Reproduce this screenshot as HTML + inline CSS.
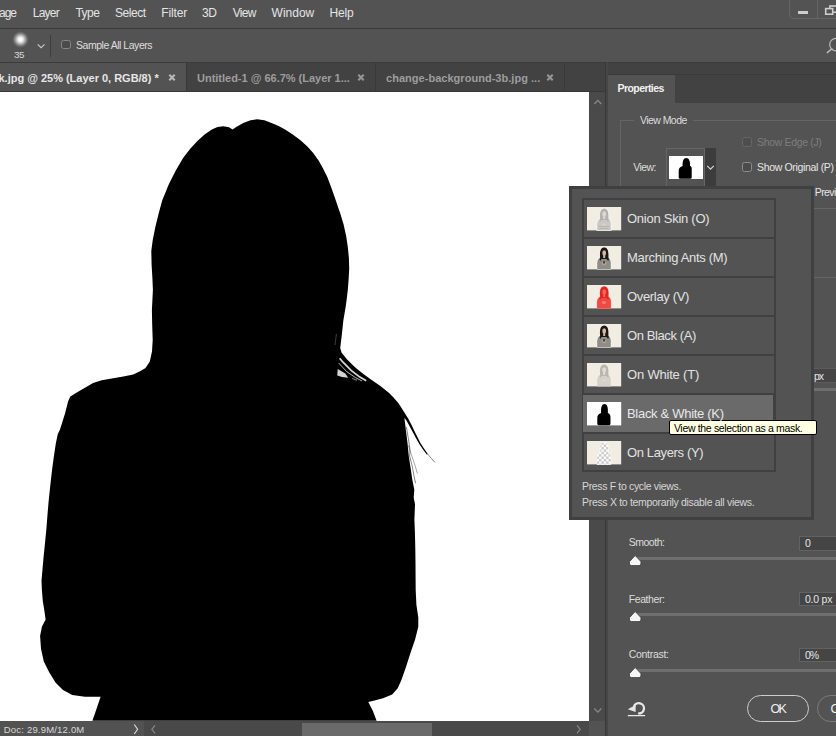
<!DOCTYPE html>
<html><head><meta charset="utf-8"><title>ps</title>
<style>
html,body{margin:0;padding:0;}
body{width:836px;height:736px;overflow:hidden;background:#535353;position:relative;font-family:'Liberation Sans', sans-serif;}
.a{position:absolute;}
.t{position:absolute;white-space:pre;line-height:1;font-family:'Liberation Sans', sans-serif;}
svg{position:absolute;overflow:visible;}
</style></head><body>
<div class="a" style="left:0px;top:0px;width:836px;height:28px;background:#535353;"></div>
<div class="a" style="left:0px;top:28px;width:836px;height:1px;background:#3a3a3a;"></div>
<div class="a" style="left:0px;top:29px;width:836px;height:33px;background:#535353;"></div>
<div class="a" style="left:0px;top:62px;width:836px;height:1px;background:#3b3b3b;"></div>
<div class="a" style="left:789px;top:-2px;width:60px;height:18.8px;border:1px solid #656565;border-radius:0 0 0 4px;"></div>
<div class="a" style="left:817px;top:0px;width:1px;height:17.5px;background:#656565;"></div>
<div class="a" style="left:798px;top:10.7px;width:10.3px;height:3.6px;background:#cdcdcd;"></div>
<svg style="left:820px;top:2px" width="16" height="16" viewBox="820 2 16 16"><rect x="829.9" y="6" width="8" height="6.2" fill="none" stroke="#cdcdcd" stroke-width="1.6"/><rect x="825.7" y="8.6" width="7" height="5.6" fill="#535353" stroke="#cdcdcd" stroke-width="1.6"/></svg>
<div class="a" style="left:11.8px;top:31px;width:17px;height:17px;border-radius:50%;background:radial-gradient(circle closest-side,#ffffff 0%,#fdfdfd 15%,#e9e9e9 30%,#c4c4c4 45%,#9c9c9c 60%,#797979 74%,#626262 86%,rgba(83,83,83,0) 100%);"></div>
<svg style="left:36px;top:42px" width="10" height="8" viewBox="36 42 10 8"><path d="M37.7,44.3 L41.1,47.7 L44.5,44.3" fill="none" stroke="#c9c9c9" stroke-width="1.1"/></svg>
<div class="a" style="left:50px;top:34.5px;width:1px;height:22px;background:#3e3e3e;"></div>
<div class="a" style="left:61px;top:39.5px;width:9.8px;height:9.9px;border:1.3px solid #878787;border-radius:2.5px;background:#4b4b4b;box-sizing:border-box"></div>
<svg style="left:820px;top:34px" width="16" height="24" viewBox="820 34 16 24"><circle cx="836" cy="44.6" r="6.3" fill="none" stroke="#b4b4b4" stroke-width="1.3"/><path d="M827.3,52.6 L831.7,48.8" stroke="#b4b4b4" stroke-width="1.6" stroke-linecap="round"/></svg>
<div class="a" style="left:0px;top:63px;width:605px;height:28px;background:#424242;"></div>
<div class="a" style="left:0px;top:63px;width:186px;height:28px;background:#535353;"></div>
<div class="a" style="left:186px;top:63px;width:1px;height:28px;background:#383838;"></div>
<div class="a" style="left:375px;top:63px;width:1px;height:28px;background:#383838;"></div>
<div class="a" style="left:564px;top:63px;width:1px;height:28px;background:#383838;"></div>
<div class="a" style="left:0px;top:91px;width:605px;height:1px;background:#383838;"></div>
<svg style="left:167.9px;top:72.6px" width="8" height="9" viewBox="-4 -4.5 8 9"><path d="M-2.7,-2.7 L2.7,2.7 M2.7,-2.7 L-2.7,2.7" stroke="#b8b8b8" stroke-width="2.1"/></svg>
<svg style="left:356.8px;top:72.6px" width="8" height="9" viewBox="-4 -4.5 8 9"><path d="M-2.7,-2.7 L2.7,2.7 M2.7,-2.7 L-2.7,2.7" stroke="#969696" stroke-width="2.1"/></svg>
<svg style="left:545.8px;top:72.6px" width="8" height="9" viewBox="-4 -4.5 8 9"><path d="M-2.7,-2.7 L2.7,2.7 M2.7,-2.7 L-2.7,2.7" stroke="#969696" stroke-width="2.1"/></svg>
<div class="a" style="left:589px;top:92px;width:16px;height:629px;background:#4a4a4a;"></div>
<svg style="left:589px;top:92px" width="16" height="629" viewBox="589 92 16 629"><path d="M594.3,104 L597.8,100.4 L601.3,104" fill="none" stroke="#8a8a8a" stroke-width="1.2"/><path d="M594.3,708.5 L597.8,712.1 L601.3,708.5" fill="none" stroke="#8a8a8a" stroke-width="1.2"/></svg>
<div class="a" style="left:0px;top:721px;width:605px;height:15px;background:#494949;"></div>
<div class="a" style="left:0px;top:721px;width:143.5px;height:15px;background:#525252;"></div>
<div class="a" style="left:302.4px;top:723px;width:129.6px;height:13px;background:#6a6a6a;"></div>
<div class="a" style="left:589px;top:721px;width:16px;height:15px;background:#535353;"></div>
<svg style="left:0;top:721px" width="605" height="15" viewBox="0 721 605 15"><path d="M134.3,724.5 L137.6,729.3 L134.3,734" fill="none" stroke="#e0e0e0" stroke-width="1.1"/><path d="M155,725.3 L151.8,729.3 L155,733.3" fill="none" stroke="#8a8a8a" stroke-width="1.1"/><path d="M577,725.3 L580.2,729.3 L577,733.3" fill="none" stroke="#8a8a8a" stroke-width="1.1"/></svg>
<div class="a" style="left:604.6px;top:62px;width:3.2px;height:674px;background:#464646;"></div>
<div class="a" style="left:604.6px;top:62px;width:1.8px;height:674px;background:#383838;"></div>
<div class="a" style="left:0px;top:92px;width:589px;height:629px;background:#ffffff;"></div>
<svg style="left:0;top:0" width="589" height="721" viewBox="0 0 589 721"><path d="M152.9,290 L152.4,278.3 L151.6,264.7 L151.3,251.1 L152.7,240.3 L155.4,226.7 L158.8,213.1 L162.2,200.5 L168.7,184.6 L175.9,170.3 L183.1,158.1 L190.2,148.8 L197.4,140.9 L204.6,134.4 L211.8,129.4 L217.5,126.9 L223.3,126.2 L229,127.2 L232.6,129.4 L236.2,126.9 L243.3,122.9 L250.5,120.3 L257.2,119.3 L264.4,120.3 L271.5,122.9 L278.7,126.1 L285.9,130.1 L293.1,134.7 L300.2,140.1 L307.4,146.6 L313.2,153.1 L318.9,161 L323.2,168.8 L327.5,177.5 L331.8,188.9 L336,200.9 L340.1,213.1 L343.5,224 L346.2,236.2 L347.8,247.1 L348.9,257.9 L349.2,268.8 L348.6,279.7 L347.8,290 L346.6,300 L345.6,307.2 L343.3,320.8 L341.9,334.3 L340.2,347.9 L341.5,352.6 L346.9,359.3 L355.3,367.6 L363.7,374.3 L372,380.2 L380.4,386.1 L388.8,392.8 L393.5,397.4 L398.5,403.2 L402.8,410 L408.2,418.4 L411.3,424.5 L414.3,430.7 L417.3,436.8 L420.4,442.9 L424,448.5 L427.8,453.9 L427,454.8 L423,449.6 L419.3,444 L415.9,437.9 L412.7,432 L409.6,426.2 L406.6,420.8 L404.4,417.8 L405.8,429.4 L407.6,444.1 L408.8,456.3 L410.7,468.6 L412.5,480.8 L414.3,489.4 L413.7,497.8 L415,504.3 L414.4,520 L414.9,532 L415.3,548 L415.5,564.2 L415.6,580 L415.7,590 L416.4,604.7 L418.3,617.5 L418.3,626.7 L415.1,639.5 L410.6,652.4 L406,667.1 L401.4,679.9 L397.7,688.2 L392.2,694.6 L383,698.3 L375.5,700.3 L368.3,701.9 L372.9,711.1 L376.6,720.7 L92.4,720.7 L97,707.4 L100.6,696.8 L85,696.8 L72.2,695 L63,690 L55.7,682.7 L49.3,672.6 L43.8,661.6 L41,648.7 L40.1,635.9 L41.9,626.7 L45.6,619.4 L44.3,610.2 L42.8,601 L41.9,590 L41.5,580.8 L42.5,569 L43.5,557.8 L45,543 L46.4,529.1 L47.5,514.5 L48.7,500.4 L50.4,484.5 L52.2,468.8 L54,455.5 L55.9,443 L57.8,434 L59.8,430 L61.5,424.7 L65.1,413.2 L68,401.7 L70.1,396.7 L75.9,393.1 L84.5,388.1 L93.1,383.1 L101.7,380.2 L111.8,378.5 L123.3,376.6 L133.3,374.4 L140.5,370.9 L145.5,368 L149.8,361.5 L152,351.5 L152.7,340 L152.2,325 L151.9,310 L152.4,300 Z" fill="#000"/><path d="M337.7,368.9 L345.3,373.5 L348.2,377.7 L342,377 L337.3,375.6 Z" fill="#d4d4d4"/><path d="M352,378.2 L357,380.4" stroke="#bdbdbd" stroke-width="1.2" fill="none" opacity=".6"/><path d="M339.6,358.2 L343,362.2 L351.1,370.3 L359.5,376.8 L366.2,380.8" stroke="#fff" stroke-width="1.7" fill="none" opacity=".85"/><path d="M338.6,363 L346.9,371.8 L355.3,377.5 L362,381" stroke="#fff" stroke-width="1" fill="none" opacity=".7"/><path d="M336.4,334 L335,345" stroke="#fff" stroke-width=".8" fill="none" opacity=".3"/><path d="M427.6,453.9 L431.5,458.6 L435.1,462.5" stroke="#000" stroke-width="1" fill="none" opacity=".45"/><path d="M406.4,427 L408.6,440 L410,450 L409.6,456 L412.2,466 L414,476 L415.6,483.2" stroke="#000" stroke-width=".8" fill="none" opacity=".6"/><path d="M408.2,445.3 L411.5,455 L415.2,466 L417.4,473.5" stroke="#000" stroke-width=".7" fill="none" opacity=".5"/></svg>
<div class="a" style="left:608px;top:63px;width:228px;height:12px;background:#424242;"></div>
<div class="a" style="left:608px;top:74px;width:228px;height:1px;background:#3b3b3b;"></div>
<div class="a" style="left:608px;top:75px;width:228px;height:27.5px;background:#424242;"></div>
<div class="a" style="left:608px;top:75px;width:67px;height:28px;background:#535353;"></div>
<div class="a" style="left:608px;top:102.5px;width:228px;height:634px;background:#535353;"></div>
<div class="a" style="left:619.5px;top:120.3px;width:217px;height:1px;background:#656565;"></div>
<div class="a" style="left:619.5px;top:120.3px;width:1px;height:66px;background:#656565;"></div>
<div class="a" style="left:634px;top:118px;width:59px;height:6px;background:#535353;"></div>
<div class="a" style="left:666.3px;top:148px;width:38.7px;height:39px;background:#535353;border:1px solid #666;box-sizing:border-box;"></div>
<div class="a" style="left:705px;top:148px;width:11px;height:39px;background:#3c3c3c;"></div>
<div class="a" style="left:668.9px;top:155.9px;width:34px;height:22.9px;background:#ffffff;"></div>
<svg style="left:669px;top:156px" width="35" height="23" viewBox="669 156 35 23"><path d="M680,178.7 Q678.7,178.7 678.7,177.4 L678.7,171 C678.7,168 680.2,166.9 682.6,166 C682.4,160.6 683.6,157.9 686.3,157.9 C689,157.9 690.2,160.6 690,166 C692.2,166.9 691.7,168 691.7,171 L691.7,177.4 Q691.7,178.7 690.4,178.7 Z" fill="#000"/></svg>
<svg style="left:705px;top:160px" width="11" height="14" viewBox="705 160 11 14"><path d="M707.2,165.8 L710.5,169.2 L713.8,165.8" fill="none" stroke="#d6d6d6" stroke-width="1.2"/></svg>
<div class="a" style="left:741.8px;top:137.2px;width:10px;height:9.6px;border:1.3px solid #666666;border-radius:2.5px;background:#4e4e4e;box-sizing:border-box"></div>
<div class="a" style="left:741.8px;top:162.1px;width:10px;height:9.7px;border:1.3px solid #8c8c8c;border-radius:2.5px;background:#4b4b4b;box-sizing:border-box"></div>
<div class="a" style="left:814px;top:207.5px;width:22px;height:1px;background:#666;"></div>
<div class="a" style="left:814px;top:276.7px;width:22px;height:1px;background:#666;"></div>
<div class="a" style="left:814px;top:367.5px;width:22px;height:15px;background:#454545;border-top:1px solid #5c5c5c;border-bottom:1px solid #5c5c5c;box-sizing:border-box;"></div>
<div class="a" style="left:814px;top:388.3px;width:22px;height:3px;background:#6e6e6e;"></div>
<div class="a" style="left:799.4px;top:536.4px;width:40px;height:14.2px;background:#454545;border:1px solid #626262;box-sizing:border-box;"></div>
<div class="a" style="left:634px;top:557.1px;width:202px;height:2.8px;background:#6f6f6f;"></div>
<svg style="left:628px;top:553.5px" width="14" height="14" viewBox="0 0 14 14"><path d="M7.2,1.6 L12.9,7.5 L12.9,9.8 Q12.9,11.6 11.1,11.6 L3.3,11.6 Q1.5,11.6 1.5,9.8 L1.5,7.5 Z" fill="#f6f6f6" stroke="#2e2e2e" stroke-width=".7"/></svg>
<div class="a" style="left:799.4px;top:591.5px;width:40px;height:14.2px;background:#454545;border:1px solid #626262;box-sizing:border-box;"></div>
<div class="a" style="left:634px;top:613.3000000000001px;width:202px;height:2.8px;background:#6f6f6f;"></div>
<svg style="left:628px;top:609.7px" width="14" height="14" viewBox="0 0 14 14"><path d="M7.2,1.6 L12.9,7.5 L12.9,9.8 Q12.9,11.6 11.1,11.6 L3.3,11.6 Q1.5,11.6 1.5,9.8 L1.5,7.5 Z" fill="#f6f6f6" stroke="#2e2e2e" stroke-width=".7"/></svg>
<div class="a" style="left:799.4px;top:647.5px;width:40px;height:14.2px;background:#454545;border:1px solid #626262;box-sizing:border-box;"></div>
<div class="a" style="left:634px;top:669.4px;width:202px;height:2.8px;background:#6f6f6f;"></div>
<svg style="left:628px;top:665.8px" width="14" height="14" viewBox="0 0 14 14"><path d="M7.2,1.6 L12.9,7.5 L12.9,9.8 Q12.9,11.6 11.1,11.6 L3.3,11.6 Q1.5,11.6 1.5,9.8 L1.5,7.5 Z" fill="#f6f6f6" stroke="#2e2e2e" stroke-width=".7"/></svg>
<svg style="left:626px;top:700px" width="22" height="20" viewBox="626 700 22 20"><path d="M633.9,706.9 A5.15,5.15 0 1 1 638.1,713.4" fill="none" stroke="#e8e8e8" stroke-width="2.3"/><path d="M627.8,709.2 L635.6,705.0 L635.6,712.0 Z" fill="#e8e8e8"/><path d="M627.8,715.6 L645.1,715.6" stroke="#e8e8e8" stroke-width="1.3"/></svg>
<div class="a" style="left:747.4px;top:695px;width:61.6px;height:27px;border:1.8px solid #cdcdcd;border-radius:13.5px;box-sizing:border-box;"></div>
<div class="a" style="left:817.3px;top:695px;width:61.6px;height:27px;border:1.3px solid #7c7c7c;border-radius:13.5px;box-sizing:border-box;"></div>
<div class="a" style="left:569px;top:186px;width:245px;height:334px;background:#535353;border:3px solid #404040;box-sizing:border-box;"></div>
<div class="a" style="left:581.5px;top:198px;width:194px;height:273.5px;background:#404040;"></div>
<div class="a" style="left:583.5px;top:200px;width:190px;height:37px;background:#535353;"><svg width="34.2" height="23.4" viewBox="0 0 34.2 23.4" style="left:3.4px;top:6.8px"><rect width="34.2" height="23.4" fill="#f1ede3"/><path d="M10.2,23.4 L10.2,17.2 C10.2,13.8 11.8,12.4 13.6,11.8 C12.4,5.2 13.8,1.6 17.2,1.6 C20.6,1.6 22,5.2 20.9,11.8 C22.7,12.4 23.8,13.8 23.8,17.2 L23.8,23.4 Z" fill="#fbfaf7" stroke="#fbfaf7" stroke-width="1.2"/><path d="M10.2,23.4 L10.2,17.2 C10.2,13.8 11.8,12.2 14,11.4 L20.6,11.4 C22.8,12.2 23.8,13.8 23.8,17.2 L23.8,23.4 Z" fill="#c9c8c6"/><path d="M13.1,11.6 C12.5,5.2 13.8,1.6 17.2,1.6 C20.6,1.6 21.9,5.2 21.4,11.6 Q22.3,13.4 21.2,15 L19.6,13 L14.6,13 L13.2,15 Q12.2,13.4 13.1,11.6 Z" fill="#b4b2b0"/><ellipse cx="17.2" cy="6.9" rx="1.9" ry="2.7" fill="#e2d6cf"/><rect x="16.2" y="9" width="2" height="3" fill="#e2d6cf"/><ellipse cx="17" cy="17.6" rx="2.3" ry="1.4" fill="#e0cdc6"/><path d="M12,19.5 L22,19.5 M12.5,21.5 L21.5,21.5" stroke="#aeadab" stroke-width=".7"/></svg></div>
<div class="a" style="left:583.5px;top:239px;width:190px;height:37px;background:#535353;"><svg width="34.2" height="23.4" viewBox="0 0 34.2 23.4" style="left:3.4px;top:6.8px"><rect width="34.2" height="23.4" fill="#f1ede3"/><path d="M10.2,23.4 L10.2,17.2 C10.2,13.8 11.8,12.4 13.6,11.8 C12.4,5.2 13.8,1.6 17.2,1.6 C20.6,1.6 22,5.2 20.9,11.8 C22.7,12.4 23.8,13.8 23.8,17.2 L23.8,23.4 Z" fill="#fbfaf7" stroke="#fbfaf7" stroke-width=".9"/><path d="M10.2,23.4 L10.2,17.2 C10.2,13.8 11.8,12.2 14,11.4 L20.6,11.4 C22.8,12.2 23.8,13.8 23.8,17.2 L23.8,23.4 Z" fill="#8f8d8a"/><path d="M13.1,11.6 C12.5,5.2 13.8,1.6 17.2,1.6 C20.6,1.6 21.9,5.2 21.4,11.6 Q22.3,13.4 21.2,15 L19.6,13 L14.6,13 L13.2,15 Q12.2,13.4 13.1,11.6 Z" fill="#1a1817"/><ellipse cx="17.2" cy="6.9" rx="1.9" ry="2.7" fill="#d9b6a2"/><rect x="16.2" y="9" width="2" height="3" fill="#d9b6a2"/><ellipse cx="17" cy="17.6" rx="2.3" ry="1.4" fill="#c9a390"/><rect x="16.3" y="15.2" width="1.5" height="2.4" fill="#2a2625"/></svg></div>
<div class="a" style="left:583.5px;top:278px;width:190px;height:37px;background:#535353;"><svg width="34.2" height="23.4" viewBox="0 0 34.2 23.4" style="left:3.4px;top:6.8px"><rect width="34.2" height="23.4" fill="#f1ede3"/><path d="M10.2,23.4 L10.2,17.2 C10.2,13.8 11.8,12.4 13.6,11.8 C12.4,5.2 13.8,1.6 17.2,1.6 C20.6,1.6 22,5.2 20.9,11.8 C22.7,12.4 23.8,13.8 23.8,17.2 L23.8,23.4 Z" fill="#f28c84" stroke="#f28c84" stroke-width=".7"/><path d="M10.2,23.4 L10.2,17.2 C10.2,13.8 11.8,12.2 14,11.4 L20.6,11.4 C22.8,12.2 23.8,13.8 23.8,17.2 L23.8,23.4 Z" fill="#ec4a42"/><path d="M13.1,11.6 C12.5,5.2 13.8,1.6 17.2,1.6 C20.6,1.6 21.9,5.2 21.4,11.6 Q22.3,13.4 21.2,15 L19.6,13 L14.6,13 L13.2,15 Q12.2,13.4 13.1,11.6 Z" fill="#e3261f"/><ellipse cx="17.2" cy="6.9" rx="1.9" ry="2.7" fill="#f0675e"/><rect x="16.2" y="9" width="2" height="3" fill="#f0675e"/><ellipse cx="17" cy="17.6" rx="2.3" ry="1.4" fill="#f47f76"/></svg></div>
<div class="a" style="left:583.5px;top:317px;width:190px;height:37px;background:#535353;"><svg width="34.2" height="23.4" viewBox="0 0 34.2 23.4" style="left:3.4px;top:6.8px"><rect width="34.2" height="23.4" fill="#f1ede3"/><path d="M10.2,23.4 L10.2,17.2 C10.2,13.8 11.8,12.4 13.6,11.8 C12.4,5.2 13.8,1.6 17.2,1.6 C20.6,1.6 22,5.2 20.9,11.8 C22.7,12.4 23.8,13.8 23.8,17.2 L23.8,23.4 Z" fill="#fbfaf7" stroke="#fbfaf7" stroke-width=".9"/><path d="M10.2,23.4 L10.2,17.2 C10.2,13.8 11.8,12.2 14,11.4 L20.6,11.4 C22.8,12.2 23.8,13.8 23.8,17.2 L23.8,23.4 Z" fill="#8f8d8a"/><path d="M13.1,11.6 C12.5,5.2 13.8,1.6 17.2,1.6 C20.6,1.6 21.9,5.2 21.4,11.6 Q22.3,13.4 21.2,15 L19.6,13 L14.6,13 L13.2,15 Q12.2,13.4 13.1,11.6 Z" fill="#1a1817"/><ellipse cx="17.2" cy="6.9" rx="1.9" ry="2.7" fill="#d9b6a2"/><rect x="16.2" y="9" width="2" height="3" fill="#d9b6a2"/><ellipse cx="17" cy="17.6" rx="2.3" ry="1.4" fill="#c9a390"/><rect x="16.3" y="15.2" width="1.5" height="2.4" fill="#2a2625"/></svg></div>
<div class="a" style="left:583.5px;top:356px;width:190px;height:37px;background:#535353;"><svg width="34.2" height="23.4" viewBox="0 0 34.2 23.4" style="left:3.4px;top:6.8px"><rect width="34.2" height="23.4" fill="#f1ede3"/><path d="M10.2,23.4 L10.2,17.2 C10.2,13.8 11.8,12.2 14,11.4 L20.6,11.4 C22.8,12.2 23.8,13.8 23.8,17.2 L23.8,23.4 Z" fill="#d4d1cb"/><path d="M13.1,11.6 C12.5,5.2 13.8,1.6 17.2,1.6 C20.6,1.6 21.9,5.2 21.4,11.6 Q22.3,13.4 21.2,15 L19.6,13 L14.6,13 L13.2,15 Q12.2,13.4 13.1,11.6 Z" fill="#b9b5b0"/><ellipse cx="17.2" cy="6.9" rx="1.9" ry="2.7" fill="#e8dad0"/><rect x="16.2" y="9" width="2" height="3" fill="#e8dad0"/><ellipse cx="17" cy="17.6" rx="2.3" ry="1.4" fill="#e3d2c8"/></svg></div>
<div class="a" style="left:582.6px;top:394.9px;width:190.9px;height:36.7px;background:#6a6a6a;"><div class="a" style="left:.9px;top:0"><svg width="34.2" height="23.4" viewBox="0 0 34.2 23.4" style="left:3.4px;top:6.8px"><rect width="34.2" height="23.4" fill="#ffffff"/><path d="M11.6,23.2 Q10.3,23.2 10.3,21.8 L10.3,16 C10.3,13 11.8,11.8 14.1,11 C13.8,5 14.9,2.1 17.5,2.1 C20.1,2.1 21.2,5 20.9,11 C23,11.8 23.5,13 23.5,16 L23.5,21.8 Q23.5,23.2 22.2,23.2 Z" fill="#000"/></svg></div></div>
<div class="a" style="left:583.5px;top:434px;width:190px;height:35.6px;background:#535353;"><svg width="34.2" height="23.4" viewBox="0 0 34.2 23.4" style="left:3.4px;top:6.8px"><rect width="34.2" height="23.4" fill="#f1ede3"/><clipPath id="cpl"><path d="M10.2,23.4 L10.2,17.2 C10.2,13.8 11.8,12.4 13.6,11.8 C12.4,5.2 13.8,1.6 17.2,1.6 C20.6,1.6 22,5.2 20.9,11.8 C22.7,12.4 23.8,13.8 23.8,17.2 L23.8,23.4 Z"/></clipPath><path d="M10.2,23.4 L10.2,17.2 C10.2,13.8 11.8,12.4 13.6,11.8 C12.4,5.2 13.8,1.6 17.2,1.6 C20.6,1.6 22,5.2 20.9,11.8 C22.7,12.4 23.8,13.8 23.8,17.2 L23.8,23.4 Z" fill="#fff" stroke="#fbfaf7" stroke-width="1"/><g clip-path="url(#cpl)"><rect x="9" y="1" width="16" height="23" fill="#fdfdfd"/><rect x="9.6" y="1.2" width="2.4" height="2.4" fill="#c9c9c9"/><rect x="9.6" y="6.0" width="2.4" height="2.4" fill="#c9c9c9"/><rect x="9.6" y="10.799999999999999" width="2.4" height="2.4" fill="#c9c9c9"/><rect x="9.6" y="15.599999999999998" width="2.4" height="2.4" fill="#c9c9c9"/><rect x="9.6" y="20.4" width="2.4" height="2.4" fill="#c9c9c9"/><rect x="12.0" y="3.5999999999999996" width="2.4" height="2.4" fill="#c9c9c9"/><rect x="12.0" y="8.399999999999999" width="2.4" height="2.4" fill="#c9c9c9"/><rect x="12.0" y="13.2" width="2.4" height="2.4" fill="#c9c9c9"/><rect x="12.0" y="18.0" width="2.4" height="2.4" fill="#c9c9c9"/><rect x="12.0" y="22.799999999999997" width="2.4" height="2.4" fill="#c9c9c9"/><rect x="14.399999999999999" y="1.2" width="2.4" height="2.4" fill="#c9c9c9"/><rect x="14.399999999999999" y="6.0" width="2.4" height="2.4" fill="#c9c9c9"/><rect x="14.399999999999999" y="10.799999999999999" width="2.4" height="2.4" fill="#c9c9c9"/><rect x="14.399999999999999" y="15.599999999999998" width="2.4" height="2.4" fill="#c9c9c9"/><rect x="14.399999999999999" y="20.4" width="2.4" height="2.4" fill="#c9c9c9"/><rect x="16.799999999999997" y="3.5999999999999996" width="2.4" height="2.4" fill="#c9c9c9"/><rect x="16.799999999999997" y="8.399999999999999" width="2.4" height="2.4" fill="#c9c9c9"/><rect x="16.799999999999997" y="13.2" width="2.4" height="2.4" fill="#c9c9c9"/><rect x="16.799999999999997" y="18.0" width="2.4" height="2.4" fill="#c9c9c9"/><rect x="16.799999999999997" y="22.799999999999997" width="2.4" height="2.4" fill="#c9c9c9"/><rect x="19.2" y="1.2" width="2.4" height="2.4" fill="#c9c9c9"/><rect x="19.2" y="6.0" width="2.4" height="2.4" fill="#c9c9c9"/><rect x="19.2" y="10.799999999999999" width="2.4" height="2.4" fill="#c9c9c9"/><rect x="19.2" y="15.599999999999998" width="2.4" height="2.4" fill="#c9c9c9"/><rect x="19.2" y="20.4" width="2.4" height="2.4" fill="#c9c9c9"/><rect x="21.6" y="3.5999999999999996" width="2.4" height="2.4" fill="#c9c9c9"/><rect x="21.6" y="8.399999999999999" width="2.4" height="2.4" fill="#c9c9c9"/><rect x="21.6" y="13.2" width="2.4" height="2.4" fill="#c9c9c9"/><rect x="21.6" y="18.0" width="2.4" height="2.4" fill="#c9c9c9"/><rect x="21.6" y="22.799999999999997" width="2.4" height="2.4" fill="#c9c9c9"/></g></svg></div>
<div class="a" style="left:669px;top:420.1px;width:148px;height:15.1px;background:#ffffe1;border:1px solid #000;border-radius:2px;box-sizing:border-box;"></div>
<span class="t" style="left:-1.0px;top:7.4px;font-size:12px;font-weight:400;color:#e4e4e4;letter-spacing:-1.02px">age</span>
<span class="t" style="left:32.7px;top:7.4px;font-size:12px;font-weight:400;color:#e4e4e4;letter-spacing:-0.73px">Layer</span>
<span class="t" style="left:75.4px;top:7.4px;font-size:12px;font-weight:400;color:#e4e4e4;letter-spacing:-0.47px">Type</span>
<span class="t" style="left:115.0px;top:7.4px;font-size:12px;font-weight:400;color:#e4e4e4;letter-spacing:-0.43px">Select</span>
<span class="t" style="left:161.3px;top:7.4px;font-size:12px;font-weight:400;color:#e4e4e4;letter-spacing:-0.15px">Filter</span>
<span class="t" style="left:202.0px;top:7.4px;font-size:12px;font-weight:400;color:#e4e4e4;letter-spacing:-0.34px">3D</span>
<span class="t" style="left:232.7px;top:7.4px;font-size:12px;font-weight:400;color:#e4e4e4;letter-spacing:-0.67px">View</span>
<span class="t" style="left:271.6px;top:7.4px;font-size:12px;font-weight:400;color:#e4e4e4;letter-spacing:0.00px">Window</span>
<span class="t" style="left:329.4px;top:7.4px;font-size:12px;font-weight:400;color:#e4e4e4;letter-spacing:-0.10px">Help</span>
<span class="t" style="left:14.1px;top:49.8px;font-size:9.9px;font-weight:400;color:#d8d8d8;letter-spacing:-0.58px">35</span>
<span class="t" style="left:76.0px;top:40.1px;font-size:10.5px;font-weight:400;color:#dedede;letter-spacing:-0.47px">Sample All Layers</span>
<span class="t" style="left:-1.5px;top:73.1px;font-size:11px;font-weight:700;color:#e6e6e6;letter-spacing:-0.01px">k.jpg @ 25% (Layer 0, RGB/8) *</span>
<span class="t" style="left:197.0px;top:73.1px;font-size:11px;font-weight:700;color:#9d9d9d;letter-spacing:-0.01px">Untitled-1 @ 66.7% (Layer 1...</span>
<span class="t" style="left:386.0px;top:73.1px;font-size:11px;font-weight:700;color:#9d9d9d;letter-spacing:0.03px">change-background-3b.jpg ...</span>
<span class="t" style="left:617.5px;top:83.0px;font-size:10.5px;font-weight:700;color:#f0f0f0;letter-spacing:-0.57px">Properties</span>
<span class="t" style="left:640.0px;top:115.4px;font-size:10.5px;font-weight:400;color:#dcdcdc;letter-spacing:-0.56px">View Mode</span>
<span class="t" style="left:633.3px;top:161.5px;font-size:10.5px;font-weight:400;color:#dcdcdc;letter-spacing:-0.60px">View:</span>
<span class="t" style="left:757.0px;top:136.9px;font-size:10.5px;font-weight:400;color:#7d7d7d;letter-spacing:-0.34px">Show Edge (J)</span>
<span class="t" style="left:757.0px;top:161.7px;font-size:10.5px;font-weight:400;color:#e6e6e6;letter-spacing:-0.33px">Show Original (P)</span>
<span class="t" style="left:814.8px;top:186.7px;font-size:10.5px;font-weight:400;color:#e6e6e6;letter-spacing:-0.61px">Previ</span>
<span class="t" style="left:627.0px;top:212.1px;font-size:13px;font-weight:400;color:#e2e2e2;letter-spacing:-0.26px">Onion Skin (O)</span>
<span class="t" style="left:627.0px;top:251.1px;font-size:13px;font-weight:400;color:#e2e2e2;letter-spacing:-0.30px">Marching Ants (M)</span>
<span class="t" style="left:627.0px;top:290.1px;font-size:13px;font-weight:400;color:#e2e2e2;letter-spacing:-0.33px">Overlay (V)</span>
<span class="t" style="left:627.0px;top:329.1px;font-size:13px;font-weight:400;color:#e2e2e2;letter-spacing:-0.40px">On Black (A)</span>
<span class="t" style="left:627.0px;top:368.1px;font-size:13px;font-weight:400;color:#e2e2e2;letter-spacing:-0.19px">On White (T)</span>
<span class="t" style="left:627.0px;top:407.1px;font-size:13px;font-weight:400;color:#e8e8e8;letter-spacing:-0.30px">Black &amp; White (K)</span>
<span class="t" style="left:627.0px;top:446.1px;font-size:13px;font-weight:400;color:#e2e2e2;letter-spacing:-0.36px">On Layers (Y)</span>
<span class="t" style="left:673.9px;top:422.9px;font-size:10.5px;font-weight:400;color:#000000;letter-spacing:-0.33px">View the selection as a mask.</span>
<span class="t" style="left:582.0px;top:480.7px;font-size:10.5px;font-weight:400;color:#d6d6d6;letter-spacing:-0.34px">Press F to cycle views.</span>
<span class="t" style="left:582.0px;top:496.8px;font-size:10.5px;font-weight:400;color:#d6d6d6;letter-spacing:-0.31px">Press X to temporarily disable all views.</span>
<span class="t" style="left:628.7px;top:537.4px;font-size:10.5px;font-weight:400;color:#dcdcdc;letter-spacing:-0.47px">Smooth:</span>
<span class="t" style="left:805.0px;top:538.1px;font-size:10.5px;font-weight:400;color:#e6e6e6;letter-spacing:-0.34px">0</span>
<span class="t" style="left:628.7px;top:593.5px;font-size:10.5px;font-weight:400;color:#dcdcdc;letter-spacing:-0.40px">Feather:</span>
<span class="t" style="left:805.0px;top:594.1px;font-size:10.5px;font-weight:400;color:#e6e6e6;letter-spacing:-0.24px">0.0 px</span>
<span class="t" style="left:628.7px;top:649.1px;font-size:10.5px;font-weight:400;color:#dcdcdc;letter-spacing:-0.29px">Contrast:</span>
<span class="t" style="left:805.0px;top:650.1px;font-size:10.5px;font-weight:400;color:#e6e6e6;letter-spacing:-0.99px">0%</span>
<span class="t" style="left:814.0px;top:371.1px;font-size:10.5px;font-weight:400;color:#e6e6e6;letter-spacing:-1.09px">px</span>
<span class="t" style="left:770.4px;top:702.9px;font-size:12.5px;font-weight:400;color:#f0f0f0;letter-spacing:-1.66px">OK</span>
<span class="t" style="left:830.5px;top:702.9px;font-size:12.5px;font-weight:400;color:#f0f0f0;letter-spacing:-0.53px">C</span>
<span class="t" style="left:3.8px;top:724.5px;font-size:9.5px;font-weight:400;color:#d8d8d8;letter-spacing:0.19px">Doc: 29.9M/12.0M</span>
</body></html>
